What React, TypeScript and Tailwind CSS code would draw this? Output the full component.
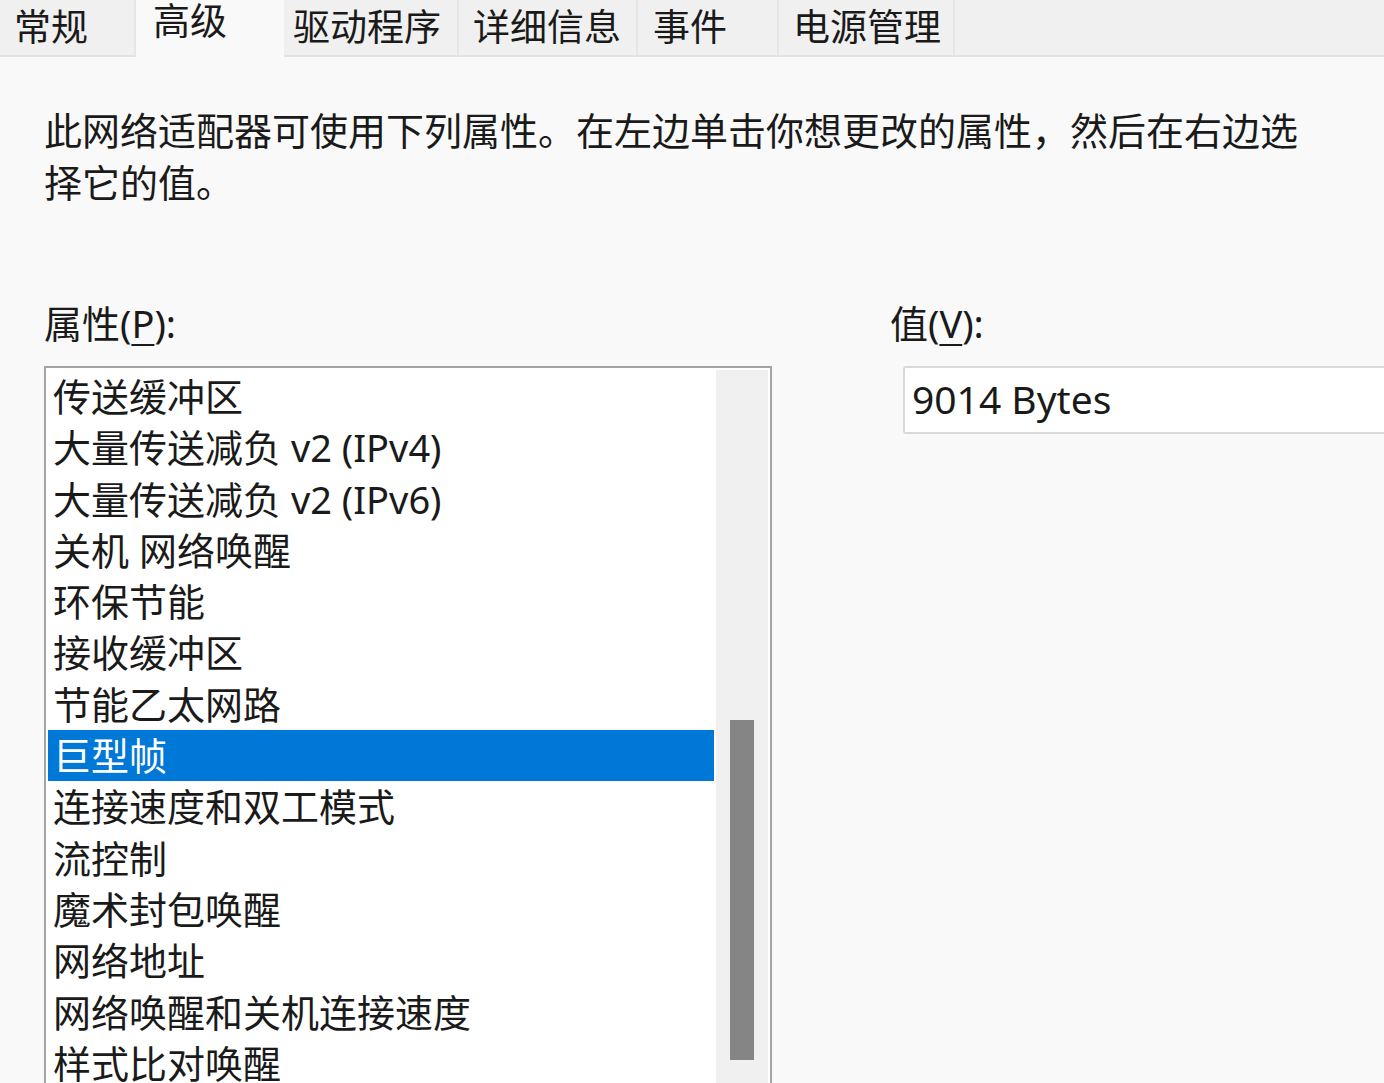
import React from "react";

const TABS = [
  { label: "常规", w: "w-[136px]", pl: "pl-[14px]" },
  { label: "高级", w: "w-[148px]", pl: "pl-[17px]", active: true },
  { label: "驱动程序", w: "w-[175px]", pl: "pl-[9px]" },
  { label: "详细信息", w: "w-[179px]", pl: "pl-[14px]" },
  { label: "事件", w: "w-[141px]", pl: "pl-[15px]" },
  { label: "电源管理", w: "w-[176px]", pl: "pl-[14px]" },
];

const PROPS = [
  "传送缓冲区",
  "大量传送减负 v2 (IPv4)",
  "大量传送减负 v2 (IPv6)",
  "关机 网络唤醒",
  "环保节能",
  "接收缓冲区",
  "节能乙太网路",
  "巨型帧",
  "连接速度和双工模式",
  "流控制",
  "魔术封包唤醒",
  "网络地址",
  "网络唤醒和关机连接速度",
  "样式比对唤醒",
  "中断调节",
];

const SELECTED = "巨型帧";

const App: React.FC = () => {
  return (
    <div
      className="h-[1083px] w-[1384px] overflow-hidden bg-[#f9f9f9] text-[#1a1a1a]"
      style={{ fontFamily: '"Noto Sans", "Noto Sans CJK SC", sans-serif' }}
    >
      {/* tab strip */}
      <div className="flex h-[57px] border-b-2 border-[#e3e3e3] bg-[#f0f0f0]">
        {TABS.map((t) =>
          t.active ? (
            <div
              key={t.label}
              className={`${t.w} ${t.pl} -mb-[2px] h-[59px] bg-[#f9f9f9] pt-[1px] text-[37px] leading-[40px]`}
            >
              {t.label}
            </div>
          ) : (
            <div
              key={t.label}
              className={`${t.w} ${t.pl} h-full border-r-2 border-[#e6e6e6] pt-[5px] text-[37px] leading-[44px]`}
            >
              {t.label}
            </div>
          )
        )}
      </div>

      {/* description */}
      <p className="w-[1320px] pl-[44px] pt-[47px] text-[38px] leading-[52px]">
        此网络适配器可使用下列属性。在左边单击你想更改的属性，然后在右边选择它的值。
      </p>

      <div className="mt-[91px] flex">
        {/* property list */}
        <div className="w-[890px] pl-[44px]">
          <div className="text-[38px] leading-[48px]">
            属性(<span className="underline decoration-2 underline-offset-[6px]">P</span>):
          </div>
          <div className="mt-[19px] flex h-[760px] w-[728px] border-2 border-[#a3a3a3] bg-white pt-[3px]">
            <div className="flex-1 px-[2px]">
              {PROPS.map((p) => (
                <div
                  key={p}
                  className={`h-[51.3px] whitespace-nowrap pl-[5px] text-[38px] leading-[51px] ${
                    p === SELECTED ? "bg-[#0078d7] text-white" : ""
                  }`}
                >
                  {p}
                </div>
              ))}
            </div>
            <div className="-mt-[1px] mr-[2px] w-[52px] bg-[#f0f0f0] pt-[350px]">
              <div className="ml-[14px] h-[340px] w-[24px] bg-[#858585]" />
            </div>
          </div>
        </div>

        {/* value */}
        <div className="flex-1">
          <div className="text-[38px] leading-[48px]">
            值(<span className="underline decoration-2 underline-offset-[6px]">V</span>):
          </div>
          <div className="ml-[13px] mt-[19px] h-[68px] rounded-l-[3px] border-2 border-r-0 border-[#d9d9d9] bg-white pl-[7px] text-[39px] leading-[62px]">
            9014 Bytes
          </div>
        </div>
      </div>
    </div>
  );
};

export default App;
